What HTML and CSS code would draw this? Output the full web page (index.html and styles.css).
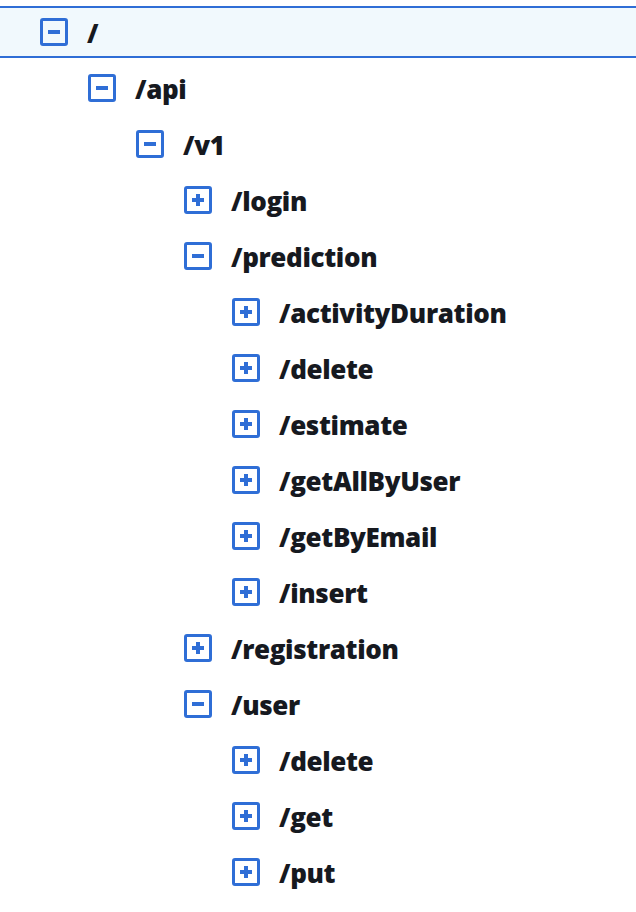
FILE: index.html
```html
<!DOCTYPE html>
<html lang="en">
<head>
    <meta charset="UTF-8">
    <meta name="viewport" content="width=device-width, initial-scale=1.0">
    <title>Resources</title>
    <link rel="stylesheet" href="styles.css">
</head>
<body>
    <ul class="tree">
        <li class="node level-0 selected"><span class="toggle minus"></span><span class="path">/</span></li>
        <li class="node level-1"><span class="toggle minus"></span><span class="path">/api</span></li>
        <li class="node level-2"><span class="toggle minus"></span><span class="path">/v1</span></li>
        <li class="node level-3"><span class="toggle plus"></span><span class="path">/login</span></li>
        <li class="node level-3"><span class="toggle minus"></span><span class="path">/prediction</span></li>
        <li class="node level-4"><span class="toggle plus"></span><span class="path">/activityDuration</span></li>
        <li class="node level-4"><span class="toggle plus"></span><span class="path">/delete</span></li>
        <li class="node level-4"><span class="toggle plus"></span><span class="path">/estimate</span></li>
        <li class="node level-4"><span class="toggle plus"></span><span class="path">/getAllByUser</span></li>
        <li class="node level-4"><span class="toggle plus"></span><span class="path">/getByEmail</span></li>
        <li class="node level-4"><span class="toggle plus"></span><span class="path">/insert</span></li>
        <li class="node level-3"><span class="toggle plus"></span><span class="path">/registration</span></li>
        <li class="node level-3"><span class="toggle minus"></span><span class="path">/user</span></li>
        <li class="node level-4"><span class="toggle plus"></span><span class="path">/delete</span></li>
        <li class="node level-4"><span class="toggle plus"></span><span class="path">/get</span></li>
        <li class="node level-4"><span class="toggle plus"></span><span class="path">/put</span></li>
    </ul>
</body>
</html>
```

FILE: styles.css
```css
body {
    margin: 0;
    background: #ffffff;
    font-family: "Open Sans", Arial, sans-serif;
    color: #16191f;
}

.tree {
    list-style: none;
    margin: 0;
    padding: 4px 0 0 0;
}

.node {
    height: 56px;
    display: flex;
    align-items: center;
    box-sizing: border-box;
}

.node.selected {
    height: 52px;
    margin: 2px 0;
    background: #f1f9fd;
    border-top: 2px solid #2f6ed6;
    border-bottom: 2px solid #2f6ed6;
}

.level-0 { padding-left: 40px; }
.level-1 { padding-left: 88px; }
.level-2 { padding-left: 136px; }
.level-3 { padding-left: 184px; }
.level-4 { padding-left: 232px; }

.toggle {
    position: relative;
    width: 28px;
    height: 28px;
    box-sizing: border-box;
    border: 3px solid #2f6ed6;
    border-radius: 3px;
    flex-shrink: 0;
}

.toggle::before,
.toggle.plus::after {
    content: "";
    position: absolute;
    background: #2f6ed6;
}

.toggle::before {
    left: 5px;
    top: 9px;
    width: 12px;
    height: 4px;
}

.toggle.plus::after {
    left: 9px;
    top: 5px;
    width: 4px;
    height: 12px;
}

.path {
    margin-left: 19px;
    font-size: 26px;
    font-weight: 800;
    letter-spacing: -0.35px;
    line-height: 1;
    padding-top: 2px;
}
```
